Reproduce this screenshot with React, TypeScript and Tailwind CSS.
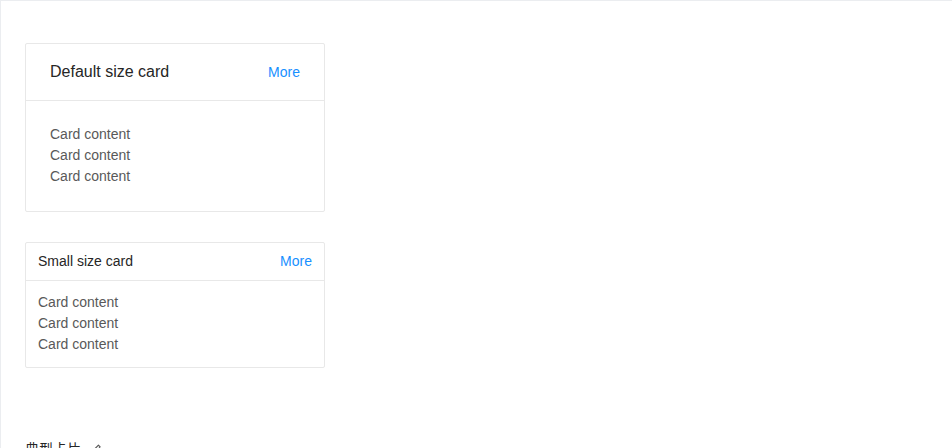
import React from "react";

function CardContent() {
  return (
    <>
      <p className="m-0">Card content</p>
      <p className="m-0">Card content</p>
      <p className="m-0">Card content</p>
    </>
  );
}

export default function App() {
  return (
    <div
      className="bg-white min-h-screen"
      style={{ fontFamily: '"Liberation Sans", Arial, "Noto Sans CJK SC", sans-serif' }}
    >
      <div className="w-[1000px] border-l border-t border-[#ebedf0]">
        <section className="pt-[42px] px-6 pb-[50px]">
          <div className="w-[300px] border border-[#e8e8e8] rounded-[2px] bg-white">
            <div className="flex items-center justify-between px-6 h-[57px] border-b border-[#e8e8e8]">
              <span className="text-[16px] leading-6 text-[#262626]">Default size card</span>
              <a className="text-[14px] text-[#1890ff] cursor-pointer">More</a>
            </div>
            <div className="px-6 pt-[23px] pb-[24px] text-[14px] leading-[21px] text-[#595959]">
              <CardContent />
            </div>
          </div>
          <div className="w-[300px] mt-[30px] border border-[#e8e8e8] rounded-[2px] bg-white">
            <div className="flex items-center justify-between px-3 h-[38px] border-b border-[#e8e8e8]">
              <span className="text-[14px] leading-[21px] text-[#262626]">Small size card</span>
              <a className="text-[14px] text-[#1890ff] cursor-pointer">More</a>
            </div>
            <div className="px-3 pt-[11px] pb-3 text-[14px] leading-[21px] text-[#595959]">
              <CardContent />
            </div>
          </div>
        </section>
        <div className="px-6 pt-[21px]">
          <div className="flex items-center gap-2 text-[14px] leading-[21px] text-[#262626]">
            <span>典型卡片</span>
            <svg width="14" height="14" viewBox="0 0 1024 1024" fill="#595959">
              <path d="M257.7 752c2 0 4-.2 6-.5L431.9 722c2-.4 3.9-1.3 5.3-2.8l423.9-423.9a9.96 9.96 0 0 0 0-14.1L694.9 114.9c-1.9-1.9-4.4-2.9-7.1-2.9s-5.2 1-7.1 2.9L256.8 538.8c-1.5 1.5-2.4 3.3-2.8 5.300l-29.5 168.2a33.5 33.5 0 0 0 9.4 29.8c6.6 6.4 14.9 9.9 23.8 9.9zm67.4-174.4L687.8 215l73.3 73.3-362.7 362.6-88.9 15.7 15.6-89zM880 836H144c-17.7 0-32 14.3-32 32v36c0 4.4 3.6 8 8 8h784c4.4 0 8-3.6 8-8v-36c0-17.7-14.3-32-32-32z" />
            </svg>
          </div>
        </div>
      </div>
    </div>
  );
}
